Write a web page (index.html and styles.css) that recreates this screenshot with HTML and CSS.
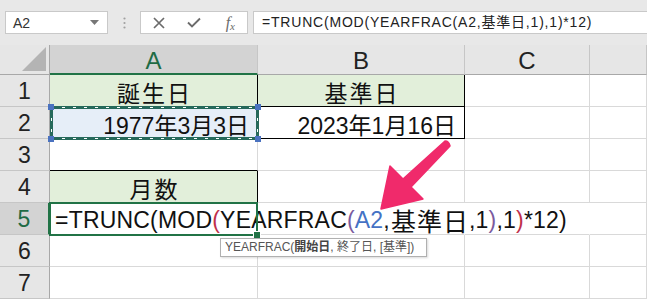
FILE: index.html
```html
<!DOCTYPE html>
<html lang="ja">
<head>
<meta charset="utf-8">
<title>Excel YEARFRAC</title>
<link rel="stylesheet" href="styles.css">
</head>
<body>
<div class="app">
  <div class="toolbar">
    <div class="namebox">
      <span>A2</span>
      <svg class="caret" width="9" height="5" viewBox="0 0 9 5"><path d="M0 0H9L4.5 5Z" fill="#777"/></svg>
    </div>
    <div class="sep">
      <svg width="3" height="12" viewBox="0 0 3 12"><circle cx="1.5" cy="1.5" r="1.1" fill="#a0a0a0"/><circle cx="1.5" cy="6" r="1.1" fill="#a0a0a0"/><circle cx="1.5" cy="10.5" r="1.1" fill="#a0a0a0"/></svg>
    </div>
    <div class="fxbtns">
      <span class="slot"><svg width="12" height="12" viewBox="0 0 12 12"><path d="M1 1L11 11M11 1L1 11" stroke="#6b6b6b" stroke-width="1.7"/></svg></span>
      <span class="slot"><svg width="14" height="11" viewBox="0 0 14 11"><path d="M1 5.5L5 9.5L13 1.5" stroke="#6b6b6b" stroke-width="1.9" fill="none"/></svg></span>
      <span class="slot fx"><i>f</i><i class="sub">x</i></span>
    </div>
    <div class="fbar">=TRUNC(MOD(YEARFRAC(A2,基準日,1),1)*12)</div>
  </div>

  <div class="sheet">
    <!-- header row -->
    <div class="corner"><svg width="24" height="24" viewBox="0 0 24 24"><path d="M0 24H24V0Z" fill="#b4b4b4"/></svg></div>
    <div class="hd hsel-col">A</div>
    <div class="hd">B</div>
    <div class="hd">C</div>
    <div class="hd"></div>

    <!-- row 1 -->
    <div class="rh">1</div>
    <div class="c ctr fill-g bk-r jp">誕生日</div>
    <div class="c ctr fill-g bk-r bk-b jp">基準日</div>
    <div class="c"></div>
    <div class="c"></div>

    <!-- row 2 -->
    <div class="rh">2</div>
    <div class="c rt ants bk-r bk-b a2">1977年3月3日
      <span class="hdl tl"></span><span class="hdl tr"></span><span class="hdl bl"></span><span class="hdl br"></span>
    </div>
    <div class="c rt bk-r bk-b b2">2023年1月16日</div>
    <div class="c"></div>
    <div class="c"></div>

    <!-- row 3 -->
    <div class="rh">3</div>
    <div class="c bk-b"></div>
    <div class="c"></div>
    <div class="c"></div>
    <div class="c"></div>

    <!-- row 4 -->
    <div class="rh">4</div>
    <div class="c ctr fill-g bk-r jp">月数</div>
    <div class="c"></div>
    <div class="c"></div>
    <div class="c"></div>

    <!-- row 5 -->
    <div class="rh hsel-row">5</div>
    <div class="c active">=TRUNC(MOD<span class="p-red">(</span>YEARFRAC<span class="p-pur">(</span><span class="ref">A2</span><span class="cursor"></span>,<span class="jpw">基準日</span>,1<span class="p-pur">)</span>,1<span class="p-red">)</span>*12)</div>
    <div class="c nor"></div>
    <div class="c nor"></div>
    <div class="c"></div>

    <!-- row 6 -->
    <div class="rh">6</div>
    <div class="c"></div>
    <div class="c"></div>
    <div class="c"></div>
    <div class="c"></div>

    <!-- row 7 -->
    <div class="rh">7</div>
    <div class="c"></div>
    <div class="c"></div>
    <div class="c"></div>
    <div class="c"></div>
  </div>

  <div class="tip">YEARFRAC(<b>開始日</b>, 終了日, [基準])</div>

  <svg class="arrow" width="647" height="300" viewBox="0 0 647 300">
    <path d="M381 209L423 199L411 187L450 146Q449 141 445 141L403 179L390 166Z" fill="#f02a6b" stroke="#f02a6b" stroke-width="1.5" stroke-linejoin="round"/>
  </svg>
</div>
</body>
</html>
```
FILE: styles.css
```css
* { box-sizing: border-box; }

html, body {
  margin: 0;
  padding: 0;
  background: #ffffff;
}

body {
  width: 647px;
  height: 300px;
  overflow: hidden;
  font-family: "Liberation Sans", "Noto Sans CJK JP", sans-serif;
  color: #111;
}

.app {
  position: relative;
  width: 647px;
  height: 300px;
  overflow: hidden;
}

/* ---------- formula toolbar ---------- */
.toolbar {
  height: 45px;
  background: #e8e8e8;
  display: flex;
  align-items: flex-start;
  padding: 11px 0 0 5px;
}

.namebox {
  width: 103px;
  height: 23px;
  background: #fff;
  border: 1px solid #c9c9c9;
  display: flex;
  align-items: center;
  justify-content: space-between;
  padding: 0 8px 0 7px;
  font-size: 14px;
  color: #333;
}

.sep {
  width: 32px;
  height: 23px;
  display: flex;
  align-items: center;
  justify-content: center;
}

.fxbtns {
  width: 108px;
  height: 23px;
  background: #fff;
  border: 1px solid #c9c9c9;
  display: flex;
  align-items: center;
}

.slot {
  width: 36px;
  height: 21px;
  display: flex;
  align-items: center;
  justify-content: center;
}

.fx {
  font-family: "Liberation Serif", serif;
  color: #6b6b6b;
  font-size: 16px;
  padding-left: 2px;
}

.fx .sub {
  font-size: 11px;
  position: relative;
  top: 3px;
}

.fbar {
  flex: 1;
  margin-left: 5px;
  height: 23px;
  background: #fff;
  border: 1px solid #c9c9c9;
  border-right: none;
  font-size: 14px;
  letter-spacing: 0.8px;
  line-height: 21px;
  padding-left: 8px;
  color: #222;
  white-space: nowrap;
  overflow: hidden;
}

/* ---------- sheet grid ---------- */
.sheet {
  display: grid;
  grid-template-columns: 50px 208px 207px 125px 57px;
  grid-template-rows: 30px repeat(7, 32px);
}

.corner {
  background: #e6e6e6;
  border-right: 1px solid #a8a8a8;
  border-bottom: 1px solid #a8a8a8;
  display: flex;
  align-items: flex-end;
  justify-content: flex-end;
  padding: 0 3px 3px 0;
}

.hd {
  background: #e6e6e6;
  border-right: 1px solid #c6c6c6;
  border-bottom: 1px solid #a8a8a8;
  display: flex;
  align-items: center;
  justify-content: center;
  font-size: 24px;
  padding-top: 3px;
  color: #222;
}

.hsel-col {
  background: #d3d3d3;
  color: #1f6b45;
  border-bottom: 2px solid #217346;
}

.rh {
  background: #e6e6e6;
  border-right: 1px solid #a8a8a8;
  border-bottom: 1px solid #c6c6c6;
  display: flex;
  align-items: center;
  justify-content: center;
  font-size: 23px;
  padding-top: 2px;
  color: #222;
}

.hsel-row {
  background: #d3d3d3;
  color: #1f6b45;
  border-right: 2px solid #217346;
}

.c {
  border-right: 1px solid #d9d9d9;
  border-bottom: 1px solid #d9d9d9;
  display: flex;
  align-items: center;
  font-size: 23px;
  padding: 2px 4px 0;
  white-space: nowrap;
  color: #111;
}

.ctr { justify-content: center; }
.rt { justify-content: flex-end; }
.jp { letter-spacing: 2px; padding-left: 6px; }

.fill-g { background: #e2efda; }
.bk-r { border-right-color: #000; }
.bk-b { border-bottom-color: #000; }
.nor { border-right-color: transparent; }

.b2 { padding-right: 8px; }

/* copy-range marching ants on A2 */
.a2 {
  position: relative;
  background: #e6eef8;
  padding-right: 8px;
}

.a2::before {
  content: "";
  position: absolute;
  top: -1px;
  left: 0;
  right: -2px;
  bottom: -2px;
  border: 3px solid #26695b;
}

.a2::after {
  content: "";
  position: absolute;
  top: 0;
  left: 1px;
  right: -1px;
  bottom: -1px;
  background:
    repeating-linear-gradient(90deg, #fff 0 3px, transparent 3px 11px) top / 100% 1px no-repeat,
    repeating-linear-gradient(90deg, #fff 0 3px, transparent 3px 11px) bottom / 100% 1px no-repeat,
    repeating-linear-gradient(180deg, #fff 0 3px, transparent 3px 11px) left / 1px 100% no-repeat,
    repeating-linear-gradient(180deg, #fff 0 3px, transparent 3px 11px) right / 1px 100% no-repeat;
}

.hdl {
  position: absolute;
  width: 6px;
  height: 6px;
  background: #4a72c0;
  z-index: 2;
}
.hdl.tl { top: -3px; left: -2px; }
.hdl.tr { top: -3px; right: -4px; }
.hdl.bl { bottom: -4px; left: -2px; }
.hdl.br { bottom: -4px; right: -4px; }

/* active cell A5 with overflowing formula */
.active {
  position: relative;
  z-index: 2;
  overflow: visible;
  padding-left: 5px;
  padding-top: 3px;
  letter-spacing: 0.2px;
}

.jpw { font-size: 25px; letter-spacing: 1px; padding-left: 1px; }

.active::after {
  content: "";
  position: absolute;
  top: -1px;
  left: -1px;
  right: -1px;
  bottom: -2px;
  border: 2px solid #217346;
}

.active::before {
  content: "";
  position: absolute;
  right: -4px;
  bottom: -5px;
  width: 6px;
  height: 6px;
  background: #217346;
  border: 1px solid #fff;
  z-index: 1;
}

.p-red { color: #c0304a; }
.p-pur { color: #7a5a9e; }
.ref { color: #4472c4; }

.cursor {
  display: inline-block;
  width: 1px;
  height: 24px;
  background: #000;
  vertical-align: -4px;
}

/* ---------- overlays ---------- */
.tip {
  position: absolute;
  left: 220px;
  top: 238px;
  width: 207px;
  height: 19px;
  background: #fff;
  border: 1px solid #b0b0b0;
  box-shadow: 1px 1px 2px rgba(0, 0, 0, 0.15);
  font-size: 12px;
  line-height: 17px;
  padding-left: 4px;
  color: #555;
  white-space: nowrap;
  z-index: 5;
}

.tip b { color: #444; font-weight: 600; }

.arrow {
  position: absolute;
  left: 0;
  top: 0;
  z-index: 6;
  pointer-events: none;
}
```
